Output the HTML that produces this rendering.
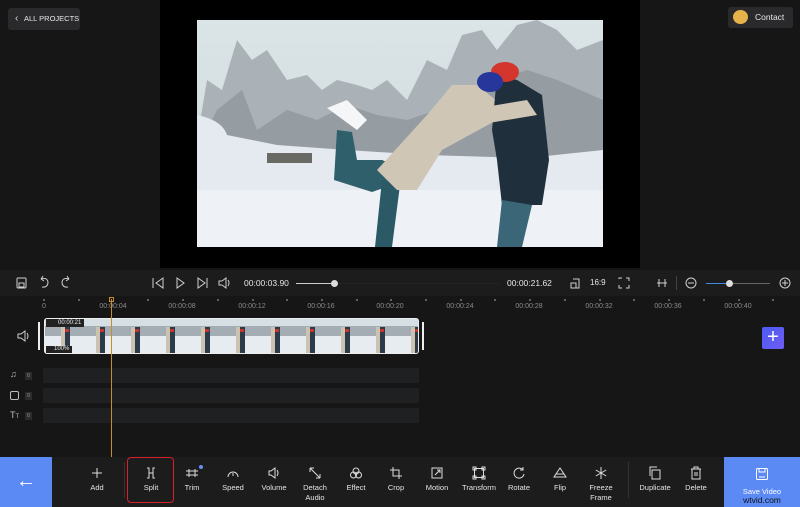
<!DOCTYPE html>
<html><head><meta charset="utf-8"><style>
*{margin:0;padding:0;box-sizing:border-box}
body{width:800px;height:507px;background:#161616;position:relative;overflow:hidden;font-family:"Liberation Sans",sans-serif;color:#ddd}
.abs{position:absolute}
.btn{background:#2a2a2c;border-radius:3px;font-size:8px;color:#e8e8e8}
.tick{position:absolute;top:303px;font-size:7px;color:#8a8a8a;transform:translateX(-50%)}
.dot{position:absolute;top:299px;width:2px;height:2px;background:#777;border-radius:1px}
.tool{position:absolute;top:466px;width:44px;margin-left:-22px;text-align:center;font-size:7.5px;color:#e4e4e4;line-height:10px}
.tool svg{display:block;margin:0 auto 3px;width:14px;height:14px}
.track{position:absolute;left:43px;width:376px;height:15px;background:#1f2022}
.tl{position:absolute;left:10px;font-size:9px;color:#bbb}
.zero{position:absolute;left:25px;width:7px;height:8px;background:#2c2c2c;font-size:5px;color:#999;text-align:center;line-height:8px}
</style></head><body>
<div class="abs" style="left:160px;top:0;width:480px;height:268px;background:#000"></div>
<svg class="abs" style="left:197px;top:20px" width="406" height="227" viewBox="0 0 406 227">
<defs><linearGradient id="sk" x1="0" y1="0" x2="0" y2="1"><stop offset="0" stop-color="#dbe4e6"/><stop offset="1" stop-color="#cdd7dc"/></linearGradient></defs>
<rect width="406" height="227" fill="url(#sk)"/>
<path d="M0 120 L10 60 L25 70 L40 20 L55 40 L70 30 L90 60 L110 55 L125 70 L140 60 L160 65 L175 70 L190 60 L210 80 L230 40 L250 50 L265 15 L285 10 L300 30 L320 5 L340 0 L360 10 L380 30 L406 20 L406 140 L0 140Z" fill="#aab2b7"/>
<path d="M0 130 L20 90 L45 70 L60 110 L90 90 L120 100 L150 85 L180 95 L210 100 L240 90 L270 70 L300 60 L330 50 L360 60 L406 80 L406 140 L0 140Z" fill="#8b9398" opacity=".7"/>
<path d="M0 95 Q25 100 30 115 L80 125 L150 130 L230 135 L330 138 L406 130 L406 227 L0 227Z" fill="#e4eaef"/>
<rect x="0" y="170" width="406" height="57" fill="#eef2f6"/>
<rect x="70" y="133" width="45" height="10" fill="#6a6a64"/>
<path d="M130 88 L150 80 L170 100 L160 110Z" fill="#f4f6f8"/>
<path d="M140 110 L137 160 L175 172 L195 165 L210 150 L185 140 L160 140 L155 112Z" fill="#2e5f6a"/>
<path d="M185 160 L178 227 L195 227 L203 165Z" fill="#2b5a66"/>
<path d="M180 150 L200 170 L220 170 L245 130 L300 100 L305 85 L280 65 L255 65 L230 95Z" fill="#cfc6b6"/>
<path d="M300 55 L320 60 L345 75 L352 140 L345 185 L305 185 L300 140 L295 110 Z" fill="#1f2f3c"/>
<path d="M305 180 L300 227 L325 227 L335 185Z" fill="#3b6677"/>
<ellipse cx="308" cy="52" rx="14" ry="10" fill="#d4352c"/>
<ellipse cx="293" cy="62" rx="13" ry="10" fill="#27369a"/>
<path d="M270 90 L330 80 L340 95 L280 105Z" fill="#cfc6b6"/>
</svg>
<div class="abs btn" style="left:8px;top:8px;width:72px;height:22px;line-height:22px;padding-left:16px;font-size:7.5px">ALL PROJECTS</div>
<div class="abs" style="left:15px;top:13px;font-size:10px;color:#ddd">‹</div>
<div class="abs btn" style="left:728px;top:7px;width:65px;height:21px;line-height:21px;padding-left:27px;font-size:8.5px">Contact</div>
<div class="abs" style="left:733px;top:10px;width:15px;height:14px;border-radius:50%;background:#e6b34a"></div>
<!-- control bar -->
<div class="abs" style="left:0;top:270px;width:800px;height:26px;background:#1c1c1c"></div>
<svg class="abs" style="left:0;top:270px" width="800" height="26" fill="none" stroke="#cfcfcf" stroke-width="1">
<rect x="17" y="8" width="9" height="10" rx="1"/><rect x="19" y="13" width="5" height="4"/>
<path d="M41 9 Q48 7 48 13 Q47 18 42 17 M41 9 L43 6 M41 9 L44 11"/>
<path d="M69 9 Q62 7 62 13 Q63 18 68 17 M69 9 L67 6 M69 9 L66 11"/>
<path d="M153 8 V18 M163 8 L156 13 L163 18Z"/><path d="M177 8 L184 13 L177 18Z"/>
<path d="M198 8 L205 13 L198 18Z M207 8 V18"/>
<path d="M219 11 H222 L226 8 V18 L222 15 H219Z M228 10 Q230 13 228 16"/>
<path d="M573 9 H579 V18 H571 V13 H576 V18"/><path d="M619 9 V8 H622 M626 8 H629 V11 M629 15 V18 H626 M622 18 H619 V15"/>
<path d="M657 13 H667 M659 9 V17 M665 9 V17"/>
<circle cx="691" cy="13" r="5"/><path d="M688 13 H694"/><circle cx="785" cy="13" r="5"/><path d="M782 13 H788 M785 10 V16"/>
</svg>
<div class="abs" style="left:244px;top:278px;font-size:8.5px;color:#e6e6e6">00:00:03.90</div>
<div class="abs" style="left:296px;top:283px;width:38px;height:1px;background:#ccc"></div>
<div class="abs" style="left:334px;top:283px;width:167px;height:1px;background:#222"></div>
<div class="abs" style="left:331px;top:280px;width:7px;height:7px;border-radius:50%;background:#ddd"></div>
<div class="abs" style="left:507px;top:278px;font-size:8.5px;color:#e6e6e6">00:00:21.62</div>
<div class="abs" style="left:590px;top:278px;font-size:8px;color:#e6e6e6">16:9</div>
<div class="abs" style="left:676px;top:276px;width:1px;height:14px;background:#444"></div>
<div class="abs" style="left:706px;top:283px;width:24px;height:1px;background:#3b8be0"></div>
<div class="abs" style="left:730px;top:283px;width:40px;height:1px;background:#666"></div>
<div class="abs" style="left:726px;top:280px;width:7px;height:7px;border-radius:50%;background:#ddd"></div>
<!-- ruler -->
<div class="tick" style="left:44px">0</div><div class="tick" style="left:113px">00:00:04</div><div class="tick" style="left:182px">00:00:08</div><div class="tick" style="left:252px">00:00:12</div><div class="tick" style="left:321px">00:00:16</div><div class="tick" style="left:390px">00:00:20</div><div class="tick" style="left:460px">00:00:24</div><div class="tick" style="left:529px">00:00:28</div><div class="tick" style="left:599px">00:00:32</div><div class="tick" style="left:668px">00:00:36</div><div class="tick" style="left:738px">00:00:40</div>
<div class="dot" style="left:43px"></div><div class="dot" style="left:78px"></div><div class="dot" style="left:147px"></div><div class="dot" style="left:182px"></div><div class="dot" style="left:217px"></div><div class="dot" style="left:252px"></div><div class="dot" style="left:286px"></div><div class="dot" style="left:321px"></div><div class="dot" style="left:356px"></div><div class="dot" style="left:390px"></div><div class="dot" style="left:425px"></div><div class="dot" style="left:460px"></div><div class="dot" style="left:494px"></div><div class="dot" style="left:529px"></div><div class="dot" style="left:564px"></div><div class="dot" style="left:599px"></div><div class="dot" style="left:633px"></div><div class="dot" style="left:668px"></div><div class="dot" style="left:703px"></div><div class="dot" style="left:738px"></div><div class="dot" style="left:772px"></div>
<!-- clip -->
<div class="abs" style="left:38px;top:322px;width:2px;height:28px;background:#eee"></div>
<div class="abs" style="left:422px;top:322px;width:2px;height:28px;background:#eee"></div>
<div class="abs" style="left:44px;top:318px;width:375px;height:36px;border:1.5px solid #eee;border-radius:3px;background:linear-gradient(#d6dfe4 0 20%,#a4adb3 20% 50%,#e6ecf0 50%);overflow:hidden">
<div style="position:absolute;left:0;top:8px;width:100%;height:26px;background:repeating-linear-gradient(90deg,transparent 0 16px,#cbc2b2 16px 20px,#2c3b4a 20px 25px,transparent 25px 35px)"></div>
<div style="position:absolute;left:0;top:10px;width:100%;height:3px;background:repeating-linear-gradient(90deg,transparent 0 20px,#c8342b 20px 24px,transparent 24px 35px)"></div>
</div>
<div class="abs" style="left:46px;top:319px;width:38px;height:8px;background:#222;font-size:6px;color:#eee;padding-left:12px;line-height:8px">00:00:21</div>
<div class="abs" style="left:46px;top:346px;width:26px;height:7px;background:#222;font-size:6px;color:#eee;padding-left:8px;line-height:7px">100%</div>
<svg class="abs" style="left:16px;top:330px" width="14" height="12" fill="none" stroke="#ccc"><path d="M2 4 H5 L9 1 V11 L5 8 H2Z M11 3 Q13 6 11 9"/></svg>
<div class="abs" style="left:762px;top:327px;width:22px;height:22px;border-radius:2px;background:linear-gradient(135deg,#4b5cf0,#6e5cf5);color:#fff;font-size:20px;text-align:center;line-height:21px">+</div>
<!-- tracks -->
<div class="track" style="top:368px"></div><div class="track" style="top:388px"></div><div class="track" style="top:408px"></div>
<div class="tl" style="top:369px">♫</div><div class="tl" style="width:9px;height:9px;border:1px solid #bbb;border-radius:2px;top:391px"></div><div class="tl" style="top:410px;font-size:9px">T<span style="font-size:6px">T</span></div>
<div class="zero" style="top:372px">0</div><div class="zero" style="top:392px">0</div><div class="zero" style="top:412px">0</div>
<!-- playhead -->
<div class="abs" style="left:111px;top:299px;width:1px;height:158px;background:#c78d2a"></div>
<div class="abs" style="left:109px;top:297px;width:5px;height:5px;border:1px solid #c78d2a"></div>
<!-- bottom -->
<div class="abs" style="left:0;top:457px;width:800px;height:50px;background:#1c1c1c"></div>
<div class="abs" style="left:0;top:457px;width:52px;height:50px;background:#5b8af5;color:#fff;font-size:20px;text-align:center;line-height:48px">←</div>
<div class="abs" style="left:724px;top:457px;width:76px;height:50px;background:#5b8af5"></div>
<svg class="abs" style="left:755px;top:467px" width="14" height="14" fill="none" stroke="#fff"><rect x="1.5" y="1.5" width="11" height="11" rx="1"/><path d="M4 1.5 V5 H10 V1.5 M4 10 H10"/></svg>
<div class="abs" style="left:724px;top:487px;width:76px;text-align:center;font-size:7.5px;color:#fff;line-height:9px">Save Video<br><span style="font-size:8.5px;color:#111">wtvid.com</span></div>
<div class="abs" style="left:127px;top:457px;width:47px;height:46px;border:1.5px solid #d6222a;border-radius:4px"></div>
<div class="abs" style="left:124px;top:462px;width:1px;height:36px;background:#333"></div>
<div class="abs" style="left:628px;top:462px;width:1px;height:36px;background:#333"></div>
<div class="abs" style="left:199px;top:465px;width:4px;height:4px;border-radius:50%;background:#6a8df5"></div>
<div class="tool" style="left:97px"><svg viewBox="0 0 14 14" fill="none" stroke="#ddd"><path d="M7 2V12M2 7H12"/></svg>Add</div>
<div class="tool" style="left:151px"><svg viewBox="0 0 14 14" fill="none" stroke="#ddd"><path d="M3 2H5V12H3 M11 2H9V12H11 M5 7H9"/></svg>Split</div>
<div class="tool" style="left:192px"><svg viewBox="0 0 14 14" fill="none" stroke="#ddd"><path d="M1 5H13M1 9H13M4 3V11M10 3V11"/></svg>Trim</div>
<div class="tool" style="left:233px"><svg viewBox="0 0 14 14" fill="none" stroke="#ddd"><path d="M2 11A5 5 0 1 1 12 11M7 7V10"/></svg>Speed</div>
<div class="tool" style="left:274px"><svg viewBox="0 0 14 14" fill="none" stroke="#ddd"><path d="M2 5H4L8 2V12L4 9H2Z M10 4Q12 7 10 10"/></svg>Volume</div>
<div class="tool" style="left:315px"><svg viewBox="0 0 14 14" fill="none" stroke="#ddd"><path d="M2 2L12 12M2 2H6M2 2V6M12 12H8M12 12V8"/></svg>Detach<br>Audio</div>
<div class="tool" style="left:356px"><svg viewBox="0 0 14 14" fill="none" stroke="#ddd"><circle cx="7" cy="5" r="3"/><circle cx="4.5" cy="9" r="3"/><circle cx="9.5" cy="9" r="3"/></svg>Effect</div>
<div class="tool" style="left:396px"><svg viewBox="0 0 14 14" fill="none" stroke="#ddd"><path d="M4 1V10H13M1 4H10V13"/></svg>Crop</div>
<div class="tool" style="left:437px"><svg viewBox="0 0 14 14" fill="none" stroke="#ddd"><rect x="2" y="2" width="10" height="10"/><path d="M5 9L10 4M7 4H10V7"/></svg>Motion</div>
<div class="tool" style="left:479px"><svg viewBox="0 0 14 14" fill="none" stroke="#ddd"><rect x="2.5" y="2.5" width="9" height="9"/><rect x="1" y="1" width="3" height="3"/><rect x="10" y="1" width="3" height="3"/><rect x="1" y="10" width="3" height="3"/><rect x="10" y="10" width="3" height="3"/></svg>Transform</div>
<div class="tool" style="left:519px"><svg viewBox="0 0 14 14" fill="none" stroke="#ddd"><path d="M11 4A5 5 0 1 0 12 8M11 1V4H8"/></svg>Rotate</div>
<div class="tool" style="left:560px"><svg viewBox="0 0 14 14" fill="none" stroke="#ddd"><path d="M7 2L1 11H13Z M3 8H11"/></svg>Flip</div>
<div class="tool" style="left:601px"><svg viewBox="0 0 14 14" fill="none" stroke="#ddd"><path d="M7 1V13M1.8 4L12.2 10M1.8 10L12.2 4"/></svg>Freeze<br>Frame</div>
<div class="tool" style="left:655px"><svg viewBox="0 0 14 14" fill="none" stroke="#ddd"><rect x="4" y="4" width="8" height="9"/><path d="M2 10V1H9"/></svg>Duplicate</div>
<div class="tool" style="left:696px"><svg viewBox="0 0 14 14" fill="none" stroke="#ddd"><path d="M2 3H12M5 3V1H9V3M3 3V13H11V3M6 6V10M8 6V10"/></svg>Delete</div>
</body></html>
